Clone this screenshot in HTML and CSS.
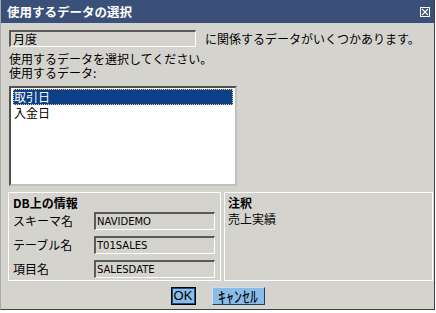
FILE: index.html
```html
<!DOCTYPE html>
<html lang="ja">
<head>
  <meta charset="UTF-8">
  <title>使用するデータの選択</title>
  <link rel="stylesheet" href="styles.css">
</head>
<body>
  <div class="dialog">
    <div class="titlebar">
      <span class="title">使用するデータの選択</span>
      <svg class="close" width="10" height="10" viewBox="0 0 10 10">
        <rect x="0.5" y="0.5" width="9" height="9" fill="none" stroke="#fff"/>
        <path d="M2 2 L8 8 M8 2 L2 8" stroke="#fff" stroke-width="1.2"/>
      </svg>
    </div>
    <div class="content">
      <div class="top-row">
        <div class="field field-wide">月度</div>
        <span class="note">に関係するデータがいくつかあります。</span>
      </div>
      <p class="line first">使用するデータを選択してください。</p>
      <p class="line second">使用するデータ:</p>
      <ul class="listbox">
        <li class="selected">取引日</li>
        <li>入金日</li>
      </ul>
      <div class="groups">
        <div class="group group-db">
          <h3>DB上の情報</h3>
          <div class="info-row"><span class="label">スキーマ名</span><span class="field field-small">NAVIDEMO</span></div>
          <div class="info-row"><span class="label">テーブル名</span><span class="field field-small">T01SALES</span></div>
          <div class="info-row"><span class="label">項目名</span><span class="field field-small">SALESDATE</span></div>
        </div>
        <div class="group group-note">
          <h3>注釈</h3>
          <p class="note-text">売上実績</p>
        </div>
      </div>
      <div class="buttons">
        <button class="btn btn-ok">OK</button>
        <button class="btn btn-cancel">ｷｬﾝｾﾙ</button>
      </div>
    </div>
  </div>
</body>
</html>
```

FILE: styles.css
```css
/* Dialog window */
body {
  margin: 0;
  padding: 0;
  background: #ffffff;
  font-family: "Noto Sans CJK JP", "DejaVu Sans", sans-serif;
  font-size: 12px;
  line-height: 14px;
  color: #000;
}
.dialog {
  width: 435px;
  height: 310px;
  background: #d5d3ce;
  border-left: 1px solid #a9a9a9;
  border-right: 1px solid #404040;
  border-bottom: 1px solid #404040;
  box-sizing: border-box;
  display: flex;
  flex-direction: column;
}
.titlebar {
  height: 23px;
  background: #3b5079;
  color: #fff;
  display: flex;
  align-items: center;
  justify-content: space-between;
  padding: 0 4px 0 6px;
  flex-shrink: 0;
}
.title {
  font-weight: bold;
  font-size: 12.5px;
}
.close {
  display: block;
  margin-top: 1px;
}
.content {
  padding: 7px 0 0 8px;
}
.top-row {
  display: flex;
  align-items: center;
  height: 17px;
}
.field {
  box-sizing: border-box;
  border-top: 2px solid #5a5a5a;
  border-left: 2px solid #5a5a5a;
  border-right: 1px solid #ffffff;
  border-bottom: 1px solid #ffffff;
  background: #d5d3ce;
  display: flex;
  align-items: center;
  padding-left: 2px;
  white-space: nowrap;
}
.field-wide {
  width: 187px;
  height: 17px;
}
.note {
  margin-left: 9px;
}
.line {
  margin: 0;
  line-height: 14px;
}
.line.first {
  margin-top: 4px;
  line-height: 15px;
}
.line.second {
  line-height: 14px;
}
.listbox {
  list-style: none;
  margin: 6px 0 0 0;
  padding: 1px 2px;
  width: 228px;
  height: 100px;
  box-sizing: border-box;
  border-top: 2px solid #505050;
  border-left: 2px solid #505050;
  border-right: 2px solid #c0c0c0;
  border-bottom: 2px solid #c0c0c0;
  background: #fff;
}
.listbox li {
  height: 16px;
  line-height: 15px;
  padding-left: 1px;
  box-sizing: border-box;
}
.listbox .selected {
  background: #0c3f85;
  color: #fff;
  outline: 1px dotted #e8c98a;
  outline-offset: -1px;
}
.groups {
  display: flex;
  gap: 3px;
  margin-top: 6px;
  margin-left: -1px;
}
.group {
  border: 1px solid #ffffff;
  box-sizing: border-box;
  height: 89px;
  padding: 3px 5px 0 4px;
}
.group h3 {
  margin: 0;
  font-size: 12px;
  line-height: 14px;
  font-weight: bold;
}
.group-db {
  width: 213px;
}
.group-note {
  width: 209px;
  padding-left: 3px;
}
.note-text {
  margin: 2px 0 0 0;
  line-height: 14px;
}
.info-row {
  display: flex;
  align-items: center;
  height: 18px;
  margin-top: 6px;
}
.group h3 + .info-row {
  margin-top: 2px;
}
.label {
  width: 81px;
}
.field-small {
  width: 121px;
  height: 18px;
  font-family: "DejaVu Sans", sans-serif;
  font-size: 10px;
  padding-top: 1px;
  padding-left: 1px;
}
.buttons {
  display: flex;
  justify-content: center;
  gap: 16px;
  margin-top: 6px;
  padding-right: 8px;
}
.btn {
  font-family: "Noto Sans CJK JP", sans-serif;
  font-size: 12px;
  height: 18px;
  padding: 0;
  background: #8bbce8;
  color: #000;
  line-height: 14px;
  white-space: nowrap;
  cursor: pointer;
}
.btn-ok {
  width: 25px;
  border: 1px solid #000;
  outline: 1px solid #1d4f80;
  outline-offset: -2px;
  font-family: "Liberation Sans", sans-serif;
  font-size: 13px;
}
.btn-cancel {
  width: 53px;
  font-size: 16px;
  border-top: 1px solid #c8e0f6;
  border-left: 1px solid #c8e0f6;
  border-right: 1px solid #1d3f66;
  border-bottom: 1px solid #1d3f66;
}
```
